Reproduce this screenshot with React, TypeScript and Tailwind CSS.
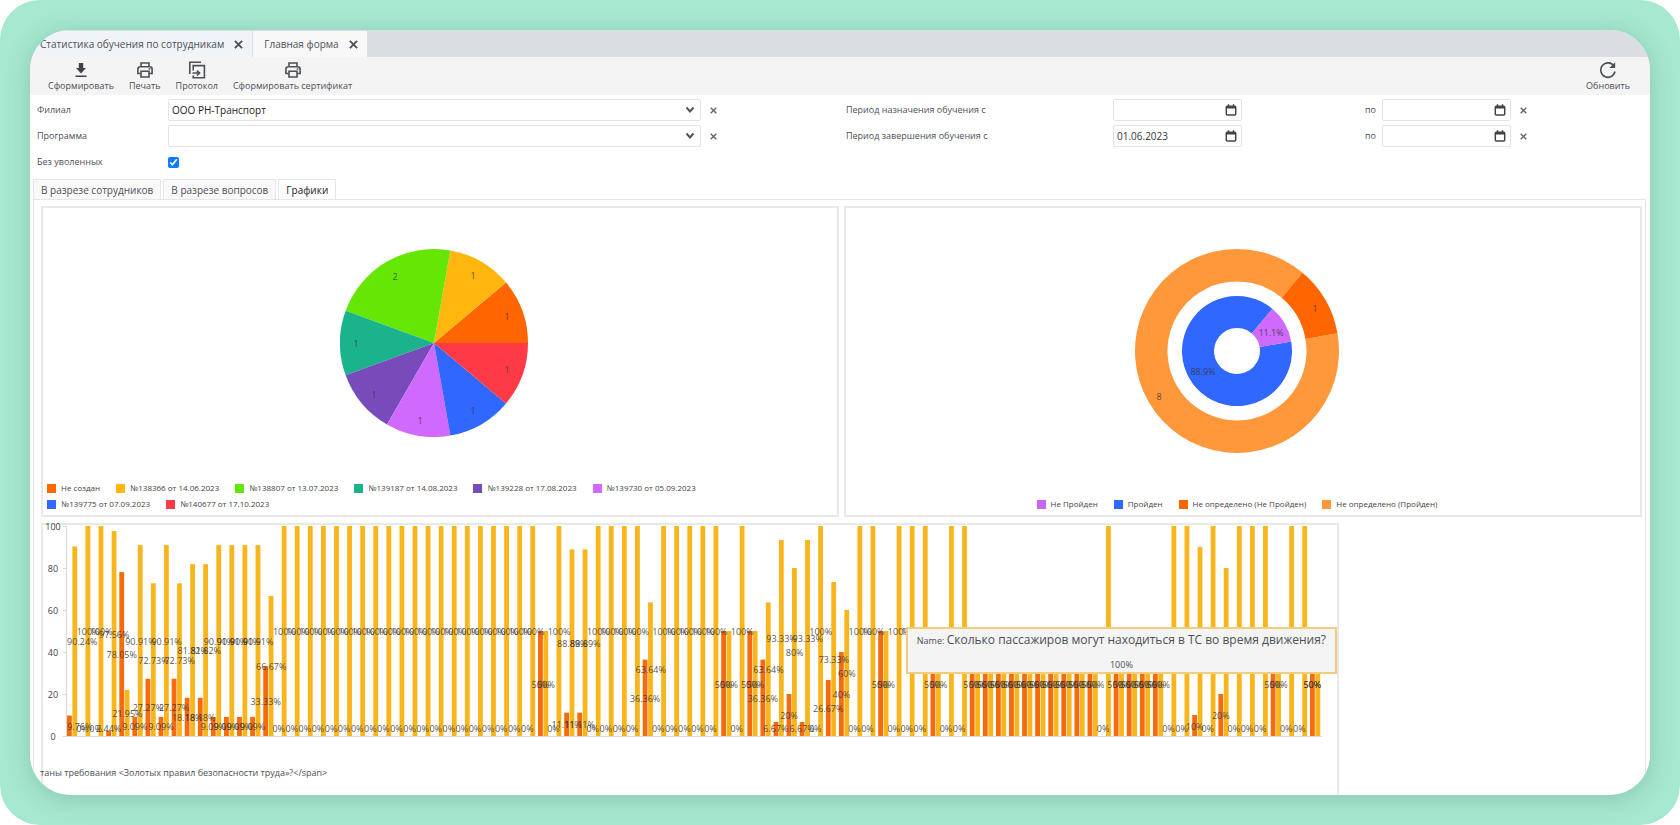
import React from "react";

type Slice = { label: string; value: number; color: string; at: [number, number] };

const PIE: Slice[] = [
  { label: "Не создан", value: 1, color: "#ff6600", at: [73, -26] },
  { label: "№138366 от 14.06.2023", value: 1, color: "#ffb70f", at: [39, -67] },
  { label: "№138807 от 13.07.2023", value: 2, color: "#66e605", at: [-39, -66] },
  { label: "№139187 от 14.08.2023", value: 1, color: "#1bb38c", at: [-78, 1] },
  { label: "№139228 от 17.08.2023", value: 1, color: "#774bba", at: [-60, 52] },
  { label: "№139730 от 05.09.2023", value: 1, color: "#d06aff", at: [-14, 78] },
  { label: "№139775 от 07.09.2023", value: 1, color: "#3067ff", at: [39, 68] },
  { label: "№140677 от 17.10.2023", value: 1, color: "#ff3a47", at: [73, 27] },
];

const RING_LEGEND = [
  { label: "Не Пройден", color: "#c868fa" },
  { label: "Пройден", color: "#3067ff" },
  { label: "Не определено (Не Пройден)", color: "#ff6600" },
  { label: "Не определено (Пройден)", color: "#ff983a" },
];

const repeat = (value: number, times: number): number[] => Array(times).fill(value);

const PASSED: number[] = [
  90.24, 100, 100, 97.56, 21.95, 90.91, 72.73, 90.91, 72.73, 81.82, 81.82,
  ...repeat(90.91, 4), 66.67, ...repeat(100, 20), 50, 100, 88.89, 88.89,
  ...repeat(100, 4), 63.64, ...repeat(100, 5), 50, 100, 50, 63.64, 93.33, 80, 93.33,
  100, 73.33, 60, 100, 100, 50, 100, 100, 100, 50, 100, 100, ...repeat(50, 10), 100,
  ...repeat(50, 4), 100, 100, 90, 100, 80, 100, 100, 100, 50, 100, 100, 50,
];

const polar = (r: number, deg: number) => {
  const a = (deg * Math.PI) / 180;
  return `${(r * Math.cos(a)).toFixed(2)} ${(-r * Math.sin(a)).toFixed(2)}`;
};

const sector = (inner: number, outer: number, from: number, to: number) => {
  const large = to - from > 180 ? 1 : 0;
  return `M${polar(outer, from)}A${outer} ${outer} 0 ${large} 0 ${polar(outer, to)}L${polar(inner, to)}A${inner} ${inner} 0 ${large} 1 ${polar(inner, from)}Z`;
};

function CloseIcon({ className }: { className: string }) {
  return (
    <svg viewBox="0 0 10 10" className={className} fill="none" stroke="currentColor" strokeWidth="2">
      <path d="M1 1l8 8M9 1L1 9" />
    </svg>
  );
}

function DownloadIcon() {
  return (
    <svg viewBox="0 0 18 18" className="size-[18px]" fill="#3f434a">
      <path d="M6.8 2h4.400v5H14L9 12.600 4 7h2.800z" />
      <path d="M3.500 14.600h11v1.500h-11z" />
    </svg>
  );
}

function PrinterIcon() {
  return (
    <svg viewBox="0 0 18 18" className="size-[18px]" fill="none" stroke="#4b4f56" strokeWidth="1.600">
      <path d="M5 5.500V2h8v3.500M4.500 12.500H1.900V8q0-2.300 2.300-2.300h9.600q2.300 0 2.300 2.300v4.500h-2.600" />
      <path d="M5 10.300h8V16H5z" />
      <path d="M12.700 8h1.600" />
    </svg>
  );
}

function ProtocolIcon() {
  return (
    <svg viewBox="0 0 18 18" className="size-[18px]" fill="none" stroke="#4b4f56" strokeWidth="1.600">
      <path d="M13 1.200H1.800V13" />
      <path d="M5.200 9.500V4.600h11.200v12.200H5.200v-2.300" />
      <path d="M4.500 12h6.500M9 9.600l2.600 2.400L9 14.400" />
    </svg>
  );
}

function RefreshIcon() {
  return (
    <svg viewBox="0 0 18 18" className="size-[18px]" fill="none" stroke="#4b4f56" strokeWidth="1.600">
      <path d="M15 5.200A7.200 7.200 0 1 0 16 10.500" />
      <path d="M16.200 1.200v5.900h-5.900z" fill="#4b4f56" stroke="none" />
    </svg>
  );
}

function ToolButton({ label, icon }: { label: string; icon: React.ReactNode }) {
  return (
    <button type="button" className="flex flex-col items-center gap-px text-[9px] leading-[12px] text-[#4b4f56]">
      {icon}
      {label}
    </button>
  );
}

function ClearButton({ label }: { label: string }) {
  return (
    <button type="button" aria-label={label} className="ml-[9px] flex size-[7px] items-center text-[#666]">
      <CloseIcon className="size-[7px]" />
    </button>
  );
}

function SelectRow({ id, label, value }: { id: string; label: string; value: string }) {
  return (
    <>
      <label htmlFor={id}>{label}</label>
      <div className="relative">
        <select id={id} defaultValue={value} className="block h-[22px] w-full appearance-none rounded-[2px] border border-[#e2e4e6] bg-white px-[3px] text-[10px] text-[#222]">
          <option value={value}>{value}</option>
        </select>
        <svg viewBox="0 0 10 8" className="pointer-events-none absolute top-[7px] right-[6px] h-[8px] w-[10px]" fill="none" stroke="#555" strokeWidth="2">
          <path d="M1.500 1.500L5 5.500l3.500-4" />
        </svg>
      </div>
      <ClearButton label={`Очистить: ${label}`} />
    </>
  );
}

function DateInput({ id, value = "" }: { id: string; value?: string }) {
  return (
    <div className="relative">
      <input id={id} type="text" defaultValue={value} className="block h-[22px] w-full rounded-[2px] border border-[#e2e4e6] bg-white px-[3px] text-[10px] text-[#333]" />
      <button type="button" aria-label="Календарь" className="absolute top-[5px] right-[5px]">
        <svg viewBox="0 0 12 12" className="size-[12px]" fill="none" stroke="#444" strokeWidth="1.500">
          <rect x="1.300" y="2.200" width="9.400" height="8.800" rx="1" />
          <path d="M1.300 3.400h9.400" strokeWidth="2" />
          <path d="M3.500 0.300v2M8.500 0.300v2" />
        </svg>
      </button>
    </div>
  );
}

function DateRow({ id, label, from }: { id: string; label: string; from?: string }) {
  return (
    <>
      <label htmlFor={`${id}-from`}>{label}</label>
      <DateInput id={`${id}-from`} value={from} />
      <label htmlFor={`${id}-to`} className="pr-[6px] text-right">по</label>
      <DateInput id={`${id}-to`} />
      <ClearButton label={`Очистить: ${label}`} />
    </>
  );
}

function Legend({ items, className }: { items: { label: string; color: string }[]; className: string }) {
  return (
    <ul className={`flex flex-wrap gap-x-[16px] text-[8px] leading-[16px] text-[#444] ${className}`}>
      {items.map((item) => (
        <li key={item.label} className="flex items-center gap-[5px]">
          <span className="size-[9px]" style={{ backgroundColor: item.color }} />
          {item.label}
        </li>
      ))}
    </ul>
  );
}

function PieChart() {
  const total = PIE.reduce((sum, s) => sum + s.value, 0);
  let angle = 0;
  return (
    <svg viewBox="-94 -94 188 188" className="size-[188px]" fontSize="9" textAnchor="middle" fill="#333">
      {PIE.map((s) => {
        const from = angle;
        angle += (s.value / total) * 360;
        return <path key={s.label} d={sector(0, 94, from, angle)} fill={s.color} />;
      })}
      {PIE.map((s) => (
        <text key={s.label} x={s.at[0]} y={s.at[1] + 3} fillOpacity="0.8">{s.value}</text>
      ))}
    </svg>
  );
}

function RingChart() {
  return (
    <svg viewBox="-102 -102 204 204" className="size-[204px]" fontSize="9" textAnchor="middle" fill="#333">
      <path d={sector(69.5, 102, 50, 370)} fill="#ff983a" />
      <path d={sector(69.5, 102, 10, 50)} fill="#ff6600" />
      <path d={sector(23, 55, 50, 370)} fill="#3067ff" />
      <path d={sector(23, 55, 10, 50)} fill="#d06aff" />
      <g fillOpacity="0.8">
        <text x="78" y="-39">1</text>
        <text x="-78" y="49">8</text>
        <text x="34" y="-15">11.1%</text>
        <text x="-34" y="24">88.9%</text>
      </g>
    </svg>
  );
}

const AXIS_X = 23;
const BASE_Y = 211;
const PLOT_H = 210;
const STEP = 13.084;

const round2 = (n: number) => Math.round(n * 100) / 100;
const labelWidth = (text: string) => text.length * 5.1;

function BarLabel({ x, value }: { x: number; value: number }) {
  const text = `${value}%`;
  const half = labelWidth(text) / 2;
  const cx = Math.min(Math.max(x, AXIS_X + 1 + half), AXIS_X + 1254 - half);
  const cy = Math.min(BASE_Y - (value / 100) * PLOT_H * 0.5, BASE_Y - 8);
  return <text x={cx} y={cy + 4}>{text}</text>;
}

function BarChart() {
  const groups = PASSED.map((passed, i) => ({
    passed,
    failed: round2(100 - passed),
    x: AXIS_X + 1 + i * STEP,
  }));
  return (
    <svg viewBox="0 0 1294 224" className="block h-auto w-full overflow-visible" fontSize="9" fill="#444">
      <path d={`M${AXIS_X + 0.5} 1V${BASE_Y}.5H${AXIS_X + 1256}`} stroke="#d8dadc" fill="none" />
      {[0, 20, 40, 60, 80, 100].map((tick) => {
        const y = BASE_Y - (tick / 100) * PLOT_H;
        return (
          <g key={tick}>
            <path d={`M${AXIS_X - 3} ${y + 0.5}h3`} stroke="#d8dadc" />
            <text x="10" y={y + 4} textAnchor="middle">{tick}</text>
          </g>
        );
      })}
      {groups.map((g, i) => (
        <g key={i}>
          <rect x={g.x} y={BASE_Y - (g.failed / 100) * PLOT_H} width="4.8" height={(g.failed / 100) * PLOT_H} fill="#f66a10" />
          <rect x={g.x + 5.4} y={BASE_Y - (g.passed / 100) * PLOT_H} width="4.8" height={(g.passed / 100) * PLOT_H} fill="#f9b61c" />
        </g>
      ))}
      <g textAnchor="middle" fill="#333" fillOpacity="0.85">
        {groups.map((g, i) => (
          <React.Fragment key={i}>
            <BarLabel x={g.x + 2.4} value={g.failed} />
            <BarLabel x={g.x + 8} value={g.passed} />
          </React.Fragment>
        ))}
      </g>
    </svg>
  );
}

export default function App() {
  return (
    <div className="h-screen bg-white font-['Open_Sans',sans-serif] text-[#4b4f56]">
      <div className="h-full rounded-[40px] bg-[#a6e8d0] p-[30px]">
        <main className="flex h-full flex-col overflow-hidden rounded-[40px] bg-white shadow-[0_4px_24px_rgba(60,100,85,0.25)]">
          <nav className="flex h-[27px] shrink-0 bg-[#dadde2] pt-px text-[10px]">
            <div className="flex items-center gap-[10px] bg-[#f0f3f8] pr-[9px] pl-[10px]">
              <a href="#stats">Статистика обучения по сотрудникам</a>
              <button type="button" aria-label="Закрыть: Статистика"><CloseIcon className="size-[9px]" /></button>
            </div>
            <div className="ml-[1px] flex items-center gap-[10px] bg-[#f8f8f9] pr-[9px] pl-[11px]">
              <a href="#main">Главная форма</a>
              <button type="button" aria-label="Закрыть: Главная форма"><CloseIcon className="size-[9px]" /></button>
            </div>
          </nav>

          <header className="flex h-[38px] shrink-0 items-start gap-[15px] bg-[#f4f4f4] pt-[4px] pr-[20px] pl-[18px]">
            <ToolButton label="Сформировать" icon={<DownloadIcon />} />
            <ToolButton label="Печать" icon={<PrinterIcon />} />
            <ToolButton label="Протокол" icon={<ProtocolIcon />} />
            <ToolButton label="Сформировать сертификат" icon={<PrinterIcon />} />
            <div className="ml-auto"><ToolButton label="Обновить" icon={<RefreshIcon />} /></div>
          </header>

          <form className="grid shrink-0 grid-cols-[809fr_804fr] items-start pt-[4px] pl-[7px] text-[9px]">
            <div className="grid grid-cols-[131fr_533fr_145fr] items-center gap-y-[4px]">
              <SelectRow id="branch" label="Филиал" value="ООО РН-Транспорт" />
              <SelectRow id="program" label="Программа" value="" />
              <label htmlFor="active">Без уволенных</label>
              <div className="flex h-[22px] items-center">
                <input id="active" type="checkbox" defaultChecked className="size-[11px] accent-[#0d7bff]" />
              </div>
            </div>
            <div className="grid grid-cols-[267fr_129fr_140fr_129fr_139fr] items-center gap-y-[4px]">
              <DateRow id="assigned" label="Период назначения обучения с" />
              <DateRow id="finished" label="Период завершения обучения с" from="01.06.2023" />
            </div>
          </form>

          <div role="tablist" className="mt-[6px] flex h-[20px] shrink-0 items-stretch gap-[2px] px-[3px] text-[10px]">
            <button type="button" role="tab" aria-selected="false" className="border border-b-0 border-[#e4e7e9] bg-[#f9f9fa] px-[7px] pt-[2px]">В разрезе сотрудников</button>
            <button type="button" role="tab" aria-selected="false" className="border border-b-0 border-[#e4e7e9] bg-[#f9f9fa] px-[7px] pt-[2px]">В разрезе вопросов</button>
            <button type="button" role="tab" aria-selected="true" className="border border-b-0 border-[#e4e7e9] bg-white px-[7px] pt-[2px] font-medium text-[#222]">Графики</button>
          </div>

          <section className="mr-[4px] ml-[3px] min-h-0 flex-1 border-x border-t border-[#e4e7e9] pt-[6px] pr-[3px] pl-[7px]">
            <div className="grid grid-cols-2 gap-[5px]">
              <figure className="flex h-[311px] flex-col border-2 border-[#e7e9e9]">
                <div className="flex justify-center pt-[41px] pr-[13px]"><PieChart /></div>
                <Legend items={PIE} className="mt-auto mb-[3px] max-w-[700px] pl-[4px]" />
              </figure>
              <figure className="flex h-[311px] flex-col items-center border-2 border-[#e7e9e9] pr-[12px]">
                <div className="pt-[41px]"><RingChart /></div>
                <Legend items={RING_LEGEND} className="mt-auto mb-[3px]" />
              </figure>
            </div>
            <figure className="relative mt-[6px] h-[400px] w-[1298px] max-w-full border-2 border-[#e7e9e9]">
              <BarChart />
              <figcaption className="mt-[16px] -ml-[3px] text-[9px] leading-[16px]">
                таны требования &lt;Золотых правил безопасности труда»?&lt;/span&gt;
              </figcaption>
              <div role="tooltip" className="absolute top-[102px] right-0 flex h-[47px] flex-col justify-between border-2 border-[#f3cd7c] bg-[#f4f4f4] px-[9px] pt-[1px] whitespace-nowrap">
                <p className="text-[12px] leading-[20px]">
                  <span className="text-[9px]">Name: </span>Сколько пассажиров могут находиться в ТС во время движения?
                </p>
                <p className="text-center text-[9px] leading-[14px]">100%</p>
              </div>
            </figure>
          </section>
        </main>
      </div>
    </div>
  );
}
